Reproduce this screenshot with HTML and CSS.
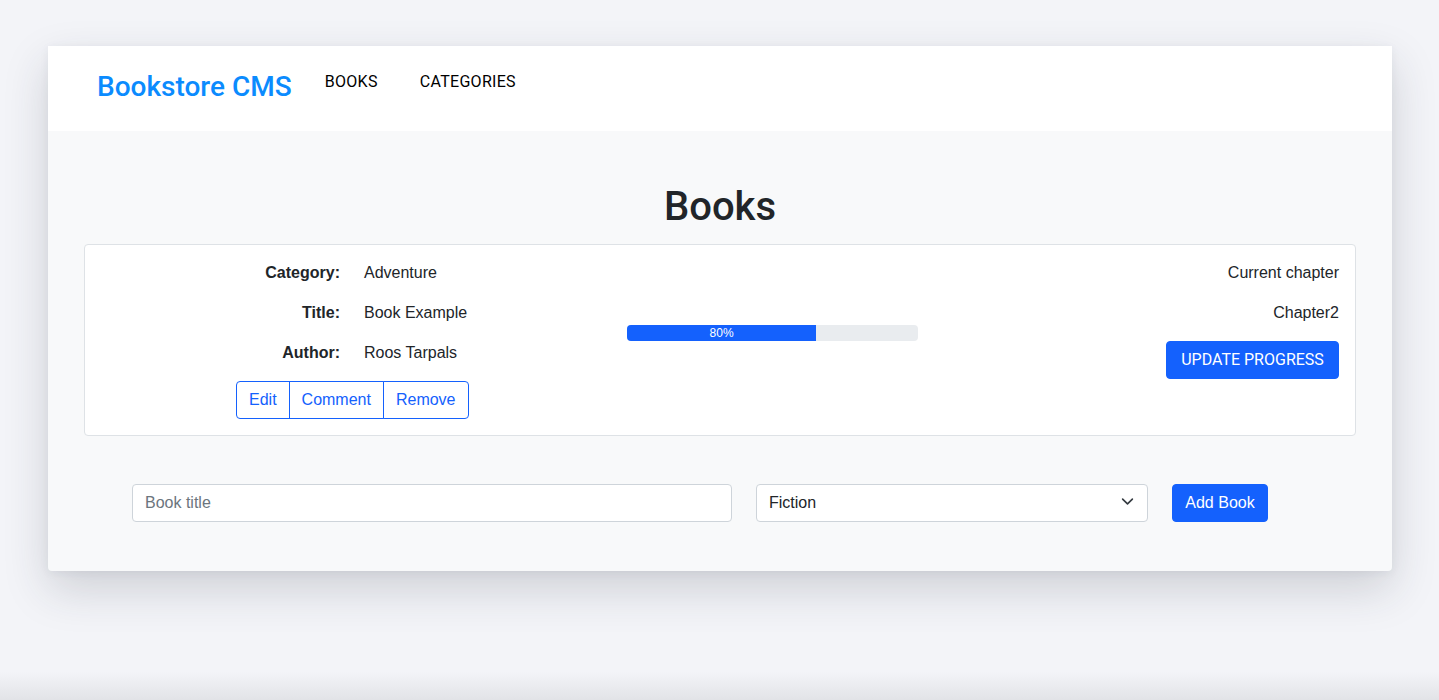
FILE: index.html
```html
<!DOCTYPE html>
<html lang="en">
<head>
<meta charset="utf-8">
<title>Bookstore CMS</title>
<link rel="stylesheet" href="styles.css">
</head>
<body>
<div class="app">
  <header class="navbar">
    <a class="brand" href="#">Bookstore CMS</a>
    <nav class="nav">
      <a class="nav-link" href="#">BOOKS</a>
      <a class="nav-link" href="#">CATEGORIES</a>
    </nav>
  </header>
  <main class="main">
    <h1 class="page-title">Books</h1>
    <section class="book-card">
      <div class="book-info">
        <div class="info-grid">
          <span class="info-label">Category:</span><span class="info-value">Adventure</span>
          <span class="info-label">Title:</span><span class="info-value">Book Example</span>
          <span class="info-label">Author:</span><span class="info-value">Roos Tarpals</span>
        </div>
        <div class="btn-group">
          <button class="btn-outline">Edit</button>
          <button class="btn-outline">Comment</button>
          <button class="btn-outline">Remove</button>
        </div>
      </div>
      <div class="progress">
        <div class="progress-bar" style="width: 65%">80%</div>
      </div>
      <div class="chapter">
        <span class="chapter-line">Current chapter</span>
        <span class="chapter-line">Chapter2</span>
        <button class="btn-primary btn-update">UPDATE PROGRESS</button>
      </div>
    </section>
    <form class="add-form">
      <input class="form-input" type="text" placeholder="Book title">
      <div class="select-wrap">
        <select class="form-select">
          <option>Fiction</option>
        </select>
        <svg class="chevron" width="16" height="16" viewBox="0 0 16 16"><path d="M2 5l6 6 6-6" fill="none" stroke="#343a40" stroke-width="2" stroke-linecap="round" stroke-linejoin="round"/></svg>
      </div>
      <button class="btn-primary add-btn" type="button">Add Book</button>
    </form>
  </main>
</div>
</body>
</html>
```

FILE: styles.css
```css
* { box-sizing: border-box; }

html {
  min-height: 100%;
  background: linear-gradient(to bottom, #f3f4f8 0, #f3f4f8 672px, #e2e3e7 700px);
}

body {
  margin: 0;
  padding: 46px 47px 0 48px;
  font-family: "Liberation Sans", Arial, Helvetica, sans-serif;
  font-size: 16px;
  line-height: 24px;
  color: #212529;
  min-height: 700px;
}

.app {
  width: 1344px;
  background: #f8f9fa;
  border-radius: 0 0 4px 4px;
  box-shadow: 0 18px 45px rgba(40, 44, 60, 0.18), 0 2px 10px rgba(40, 44, 60, 0.06);
}

.navbar {
  height: 85px;
  background: #fff;
  display: flex;
  align-items: center;
  padding-left: 49px;
}

.brand {
  font-family: Roboto, "Liberation Sans", Arial, sans-serif;
  font-weight: 500;
  color: #0b8bfe;
  font-size: 28px;
  line-height: 32px;
  text-decoration: none;
  margin-right: 33px;
  margin-bottom: 4px;
}

.nav {
  display: flex;
  gap: 42px;
  margin-bottom: 14px;
}

.nav-link {
  font-family: Roboto, "Liberation Sans", Arial, sans-serif;
  color: #000;
  text-decoration: none;
  font-size: 16px;
  letter-spacing: 0.3px;
}

.main {
  padding: 52px 36px 49px;
}

.page-title {
  margin: 0 0 13px;
  text-align: center;
  font-family: Roboto, "Liberation Sans", Arial, sans-serif;
  font-size: 40px;
  line-height: 48px;
  font-weight: 500;
  color: #212529;
}

.book-card {
  background: #fff;
  border: 1px solid #dee2e6;
  border-radius: 4px;
  padding: 16px;
  display: flex;
  align-items: flex-start;
}

.book-info {
  width: 526px;
  flex: none;
}

.info-grid {
  display: grid;
  grid-template-columns: 239px auto;
  column-gap: 24px;
  row-gap: 16px;
}

.info-label {
  text-align: right;
  font-weight: bold;
}

.btn-group {
  display: inline-flex;
  margin: 16px 0 0 135px;
}

.btn-outline {
  font-family: inherit;
  font-size: 16px;
  line-height: 24px;
  padding: 6px 12px;
  background: #fff;
  color: #1461fd;
  border: 1px solid #1461fd;
  border-radius: 0;
  margin-left: -1px;
  cursor: pointer;
}

.btn-outline:first-child {
  margin-left: 0;
  border-radius: 4px 0 0 4px;
}

.btn-outline:last-child {
  border-radius: 0 4px 4px 0;
}

.progress {
  width: 291px;
  height: 16px;
  margin-top: 64px;
  background: #e9ecef;
  border-radius: 4px;
  overflow: hidden;
  display: flex;
}

.progress-bar {
  background: #1461fd;
  color: #fff;
  font-size: 12px;
  line-height: 16px;
  text-align: center;
}

.chapter {
  flex: 1;
  display: flex;
  flex-direction: column;
  align-items: flex-end;
  gap: 16px;
}

.btn-primary {
  font-family: inherit;
  font-size: 16px;
  line-height: 24px;
  padding: 6px 12px;
  background: #1461fd;
  color: #fff;
  border: 1px solid #1461fd;
  border-radius: 4px;
  cursor: pointer;
}

.btn-update {
  font-family: Roboto, "Liberation Sans", Arial, sans-serif;
  width: 173px;
  padding: 6px 0;
}

.add-form {
  display: flex;
  gap: 24px;
  margin: 48px 0 0 48px;
}

.form-input,
.form-select {
  font-family: inherit;
  font-size: 16px;
  line-height: 24px;
  height: 38px;
  padding: 6px 12px;
  border: 1px solid #ced4da;
  border-radius: 4px;
  background: #fff;
  color: #212529;
}

.form-input {
  width: 600px;
}

.form-input::placeholder {
  color: #6c757d;
}

.select-wrap {
  position: relative;
  width: 392px;
}

.form-select {
  width: 100%;
  appearance: none;
  -webkit-appearance: none;
}

.chevron {
  position: absolute;
  right: 14px;
  top: 11px;
  width: 13px;
  height: 13px;
  pointer-events: none;
}

.add-btn {
  height: 38px;
  width: 96px;
  padding: 6px 0;
}
```
